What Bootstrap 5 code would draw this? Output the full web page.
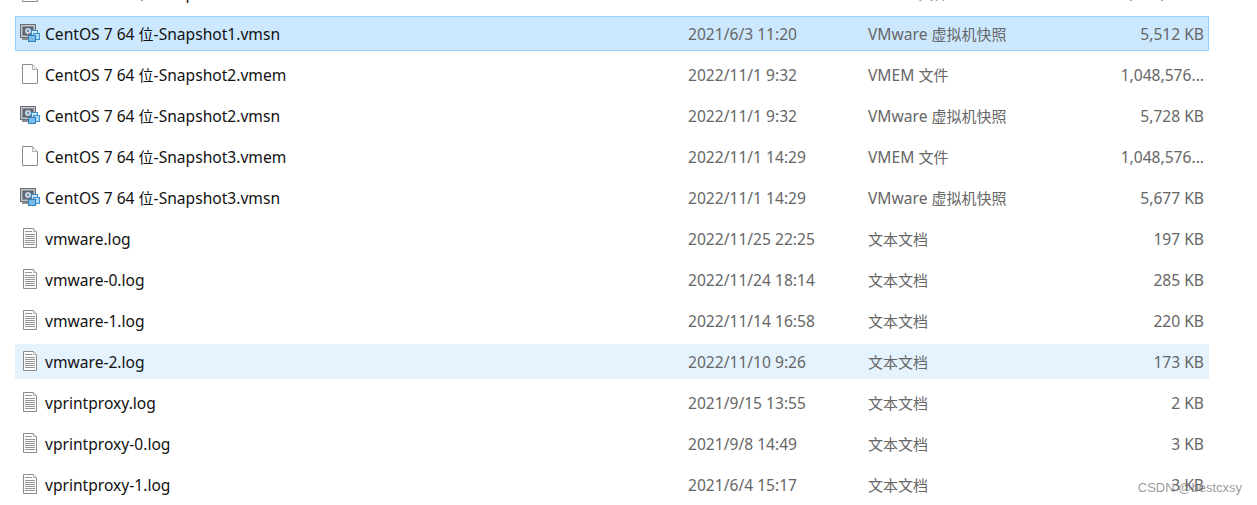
<!DOCTYPE html>
<html lang="zh-CN">
  <head>
    <meta charset="UTF-8" />
    <title>vmware files</title>
    <link href="https://cdn.jsdelivr.net/npm/bootstrap@5.3.0/dist/css/bootstrap.min.css" rel="stylesheet" />
    <style>
      html, body { height: 505px; overflow: hidden; background: #fff; }
      body { font-family: "Noto Sans", "Noto Sans CJK SC", sans-serif; font-size: 15.6px; position: relative; }
      .file-list { margin: -25px 48px 0 15px; gap: 6px; }
      .file-row { height: 35px; border: 1px solid transparent; color: #666; white-space: nowrap; }
      .file-row > div > span, .file-date, .file-type, .file-size { padding-top: 2px; }
      .file-row.picked { background: #cce8ff; border-color: #99d1ff; }
      .file-row.hovered { background: #e5f3ff; }
      .file-name { width: 672px; padding-left: 4px; color: #111; gap: 5px; }
      .file-date { width: 180px; }
      .file-type { width: 200px; }
      .file-size { flex: 1; text-align: right; padding-right: 4px; }
      .file-icon { width: 20px; height: 20px; flex: none; }
      .cjk-run { font-size: 15px; }
      .mark-text { position: absolute; right: 15px; bottom: 8px; font-family: "Liberation Sans", sans-serif; font-size: 13px; color: rgba(120, 120, 120, .75); }
    </style>
  </head>
  <body>
    <svg width="0" height="0" class="position-absolute">
      <symbol id="snap" viewBox="0 0 20 20">
        <rect x="0.5" y="1.5" width="15" height="13" fill="#c4c8ce" stroke="#6b6e75" />
        <rect x="2.5" y="3.5" width="11" height="9" fill="#5d6675" stroke="#8d9198" />
        <circle cx="8" cy="8" r="3" fill="#cfd6e2" />
        <circle cx="8" cy="8" r="1.2" fill="#6f8fb8" />
        <path d="M2 15h10v2H2z" fill="#8a8d93" />
        <rect x="11.5" y="7.5" width="6" height="5" fill="#cbe6f8" stroke="#3d8fc9" />
        <rect x="13.5" y="10.5" width="6" height="6" fill="#a9d8f5" stroke="#3d8fc9" />
        <rect x="8.5" y="12.5" width="7" height="6" fill="#78bdea" stroke="#2f7fb8" />
      </symbol>
      <symbol id="blank" viewBox="0 0 20 20">
        <path d="M2.5 0.5h10l5 5v14h-15z" fill="#fdfdfd" stroke="#8c8c8c" />
        <path d="M12.5 0.5v5h5" fill="#f0f0f0" stroke="#b0b0b0" />
      </symbol>
      <symbol id="log" viewBox="0 0 20 20">
        <path d="M3.5 0.5h10l3 3v16h-13z" fill="#fdfdfd" stroke="#8c8c8c" />
        <path d="M13.5 0.5v3h3" fill="#ededed" stroke="#b0b0b0" />
        <path d="M5 3.5h7M5 6.5h10M5 8.5h10M5 10.5h10M5 12.5h10M5 14.5h10M5 16.5h10" stroke="#959595" fill="none" />
      </symbol>
    </svg>

    <div class="file-list d-flex flex-column" id="files"></div>
    <div class="mark-text">CSDN @bestcxsy</div>

    <script>
      const rows = [
        ['blank', 'CentOS 7 64 位-Snapshot1.vmem', '2021/6/3 11:20', 'VMEM 文件', '1,048,576...'],
        ['snap', 'CentOS 7 64 位-Snapshot1.vmsn', '2021/6/3 11:20', 'VMware 虚拟机快照', '5,512 KB', 'picked'],
        ['blank', 'CentOS 7 64 位-Snapshot2.vmem', '2022/11/1 9:32', 'VMEM 文件', '1,048,576...'],
        ['snap', 'CentOS 7 64 位-Snapshot2.vmsn', '2022/11/1 9:32', 'VMware 虚拟机快照', '5,728 KB'],
        ['blank', 'CentOS 7 64 位-Snapshot3.vmem', '2022/11/1 14:29', 'VMEM 文件', '1,048,576...'],
        ['snap', 'CentOS 7 64 位-Snapshot3.vmsn', '2022/11/1 14:29', 'VMware 虚拟机快照', '5,677 KB'],
        ['log', 'vmware.log', '2022/11/25 22:25', '文本文档', '197 KB'],
        ['log', 'vmware-0.log', '2022/11/24 18:14', '文本文档', '285 KB'],
        ['log', 'vmware-1.log', '2022/11/14 16:58', '文本文档', '220 KB'],
        ['log', 'vmware-2.log', '2022/11/10 9:26', '文本文档', '173 KB', 'hovered'],
        ['log', 'vprintproxy.log', '2021/9/15 13:55', '文本文档', '2 KB'],
        ['log', 'vprintproxy-0.log', '2021/9/8 14:49', '文本文档', '3 KB'],
        ['log', 'vprintproxy-1.log', '2021/6/4 15:17', '文本文档', '3 KB']
      ];
      // chinese runs stay at 15px, latin glyphs are a bit bigger
      const cjk = (s) => s.replace(/[\u4e00-\u9fff]+/g, '<span class="cjk-run">$&</span>');
      document.getElementById('files').innerHTML = rows.map((r) => `
        <div class="file-row d-flex align-items-center flex-shrink-0 ${r[5] || ''}">
          <div class="file-name d-flex align-items-center">
            <svg class="file-icon"><use href="#${r[0]}" /></svg><span>${cjk(r[1])}</span>
          </div>
          <div class="file-date">${r[2]}</div>
          <div class="file-type">${cjk(r[3])}</div>
          <div class="file-size">${r[4]}</div>
        </div>`).join('');
    </script>
    <script src="https://cdn.jsdelivr.net/npm/bootstrap@5.3.0/dist/js/bootstrap.bundle.min.js"></script>
  </body>
</html>
